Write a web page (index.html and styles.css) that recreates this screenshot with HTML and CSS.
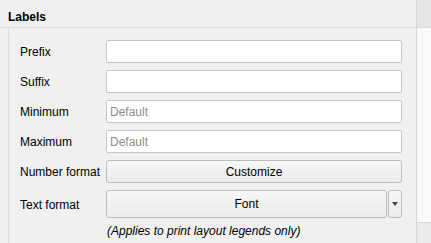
FILE: index.html
```html
<!DOCTYPE html>
<html lang="en">
  <head>
    <meta charset="UTF-8" />
    <title>Labels</title>
    <link rel="stylesheet" href="styles.css">
  </head>
  <body>
    <div class="panel">
      <div class="main">
        <div class="heading">Labels</div>
        <div class="group">
          <div class="form">
            <label>Prefix</label>
            <input class="field" type="text" />
            <label>Suffix</label>
            <input class="field" type="text" />
            <label>Minimum</label>
            <input class="field" type="text" placeholder="Default" />
            <label>Maximum</label>
            <input class="field" type="text" placeholder="Default" />
            <label>Number format</label>
            <button class="btn">Customize</button>
            <label>Text format</label>
            <div class="split">
              <button class="btn font">Font</button>
              <button class="btn drop"><span class="arrow"></span></button>
            </div>
            <span></span>
            <div class="note">(Applies to print layout legends only)</div>
          </div>
        </div>
      </div>
      <div class="scroll">
        <div class="scroll-up"></div>
        <div class="scroll-track"></div>
        <div class="scroll-down"></div>
      </div>
    </div>
  </body>
</html>
```

FILE: styles.css
```css
html,
body {
  height: 100%;
}
body {
  margin: 0;
  background: #f0f0f0;
  font-family: "Liberation Sans", Arial, sans-serif;
  font-size: 12px;
  color: #000;
  overflow: hidden;
}
.panel {
  display: flex;
  height: 243px;
}
.main {
  width: 416px;
  display: flex;
  flex-direction: column;
}
.heading {
  height: 17px;
  padding: 10px 0 0 8px;
  font-weight: bold;
  line-height: 15px;
  border-bottom: 1px solid #dadada;
}
.group {
  flex: 1;
  margin-left: 8px;
  border-left: 1px solid #dcdcdc;
  padding: 12px 14px 0 11px;
}
.form {
  display: grid;
  grid-template-columns: 86px 1fr;
  grid-template-rows: 23px 23px 23px 23px 23px 28px auto;
  row-gap: 7px;
  align-items: center;
}
.form label {
  line-height: 15px;
  padding-top: 2px;
}
.field {
  box-sizing: border-box;
  height: 23px;
  width: 100%;
  margin: 0;
  border: 1px solid #c6c6c6;
  border-radius: 2px;
  background: #fff;
  font: inherit;
  padding: 0 3px;
  outline: none;
}
.field::placeholder {
  color: #8c8c8c;
}
.btn {
  box-sizing: border-box;
  height: 23px;
  margin: 0;
  border: 1px solid #bcbcbc;
  border-radius: 3px;
  background: linear-gradient(#f7f7f7, #ebebeb);
  font: inherit;
  color: #000;
  padding: 0;
}
.form > .btn {
  width: 100%;
}
.split {
  display: flex;
  gap: 1px;
  height: 28px;
}
.split .btn {
  height: 28px;
}
.font {
  flex: 1;
}
.drop {
  width: 14px;
  display: grid;
  place-items: center;
}
.arrow {
  width: 0;
  height: 0;
  border-left: 3.5px solid transparent;
  border-right: 3.5px solid transparent;
  border-top: 4px solid #444;
}
.note {
  font-style: italic;
  margin-top: -1px;
  padding-left: 1px;
  line-height: 15px;
  white-space: nowrap;
}
.scroll {
  width: 14px;
  border-left: 1px solid #d6d6d6;
  display: flex;
  flex-direction: column;
}
.scroll-up {
  height: 27px;
  background: #e5e5e5;
  border-bottom: 1px solid #d8d8d8;
}
.scroll-track {
  flex: 1;
  background: #f9f9f9;
}
.scroll-down {
  height: 20px;
  background: #eaeaea;
  border-top: 1px solid #d8d8d8;
}
```
